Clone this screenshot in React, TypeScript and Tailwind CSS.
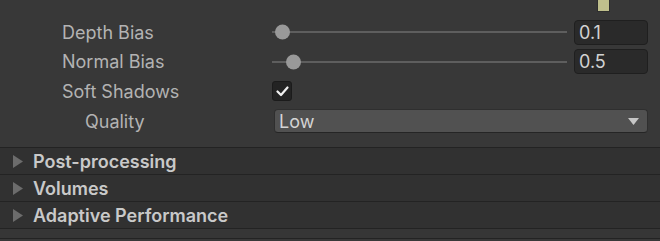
const FONT = "font-['Inter','Noto_Sans',sans-serif]";

function Slider({ pos }: { pos: number }) {
  return (
    <div className="relative flex-1 h-full flex items-center">
      <div className="w-full h-[2px] bg-[#5e5e5e]" />
      <div
        className="absolute w-[15px] h-[15px] rounded-full bg-[#999999] top-1/2 -translate-y-1/2"
        style={{ left: pos }}
      />
    </div>
  );
}

function NumField({ value }: { value: string }) {
  return (
    <div className="w-[74px] h-[25px] rounded-[4px] bg-[#2a2a2a] border border-[#1f1f1f] flex items-center pl-[4px] text-[18px] text-[#d2d2d2]">
      {value}
    </div>
  );
}

function Foldout({ title }: { title: string }) {
  return (
    <div className="h-[27px] bg-[#313131] border-b border-[#232323] flex items-center">
      <svg width="10" height="13" viewBox="0 0 10 13" className="ml-[13px] mr-[10px]">
        <path d="M0 0 L10 6.5 L0 13 Z" fill="#6c6c6c" />
      </svg>
      <span className="text-[18px] font-semibold text-[#c9c9c9]">{title}</span>
    </div>
  );
}

export default function App() {
  return (
    <div className={`w-[660px] h-[241px] bg-[#383838] overflow-hidden ${FONT}`}>
      <div className="h-[148px] relative border-b border-[#232323]">
        {/* color swatch peeking from above */}
        <div className="absolute left-[597px] top-0 w-[13px] h-[12px] bg-[#bfbf8c] border border-[#2e2e2e] border-t-0" />
        <div className="flex flex-col pt-[17px] pr-[12px]">
          <div className="h-[30px] flex items-center">
            <div className="w-[272px] pl-[62px] text-[18px] text-[#b3b3b3]">Depth Bias</div>
            <Slider pos={3} />
            <div className="ml-[7px]"><NumField value="0.1" /></div>
          </div>
          <div className="h-[29px] flex items-center">
            <div className="w-[272px] pl-[62px] text-[18px] text-[#b3b3b3]">Normal Bias</div>
            <Slider pos={14} />
            <div className="ml-[7px]"><NumField value="0.5" /></div>
          </div>
          <div className="h-[30px] flex items-center">
            <div className="w-[272px] pl-[62px] text-[18px] text-[#b3b3b3]">Soft Shadows</div>
            <div className="w-[20px] h-[20px] rounded-[3px] bg-[#232323] border border-[#1b1b1b] flex items-center justify-center">
              <svg width="13" height="11" viewBox="0 0 13 11">
                <path d="M1.5 5.5 L5 9 L11.5 1.5" stroke="#f0f0f0" strokeWidth="2.2" fill="none" strokeLinecap="round" strokeLinejoin="round" />
              </svg>
            </div>
          </div>
          <div className="h-[30px] flex items-center">
            <div className="w-[274px] pl-[85px] text-[18px] text-[#b3b3b3]">Quality</div>
            <div className="flex-1 h-[24px] rounded-[4px] bg-[#515151] border border-[#2f2f2f] border-b-[#252525] flex items-center pl-[4px] pr-[8px]">
              <span className="flex-1 text-[18px] text-[#d4d4d4]">Low</span>
              <svg width="11" height="7" viewBox="0 0 11 7">
                <path d="M0 0 L11 0 L5.5 7 Z" fill="#c6c6c6" />
              </svg>
            </div>
          </div>
        </div>
      </div>
      <Foldout title="Post-processing" />
      <Foldout title="Volumes" />
      <Foldout title="Adaptive Performance" />
      <div className="h-[10px] bg-[#363636] border-b border-[#232323]" />
    </div>
  );
}
